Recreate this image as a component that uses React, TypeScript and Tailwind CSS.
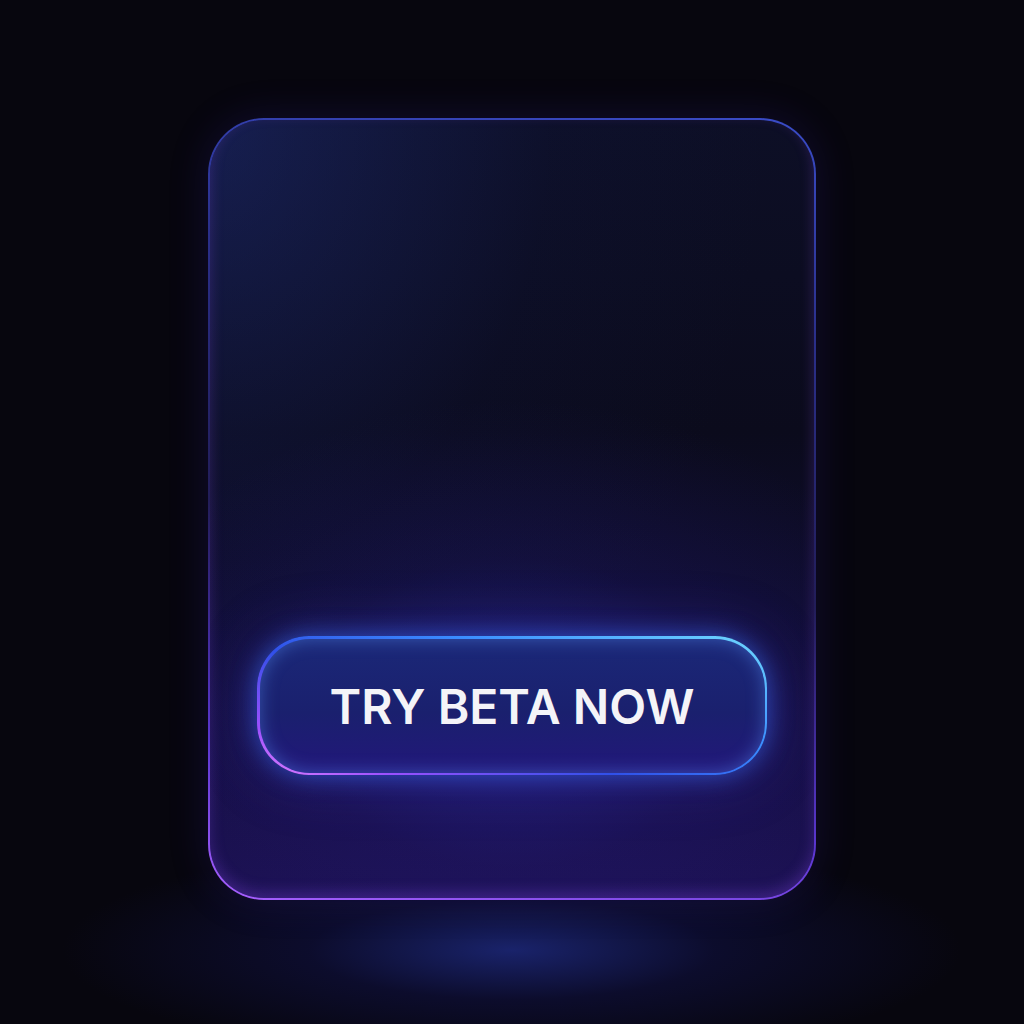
export default function App() {
  return (
    <div className="relative w-full h-[1024px] overflow-hidden bg-[#07060e] flex justify-center pt-[118px]">
      {/* floor glow */}
      <div className="absolute left-1/2 -translate-x-1/2 top-[840px] w-[900px] h-[220px] bg-[radial-gradient(ellipse_closest-side_at_center,rgba(30,42,130,0.8)_0%,rgba(20,22,90,0.4)_45%,rgba(7,6,14,0)_100%)]" />
      {/* card border */}
      <div className="relative w-[608px] h-[782px] rounded-[56px] p-[2px] bg-[linear-gradient(190deg,#3a4cc8_0%,#2a2f8a_25%,#221d58_55%,#5a36d0_82%,#a860ff_100%)] shadow-[0_0_40px_rgba(60,40,180,0.2)]">
        <div className="relative w-full h-full rounded-[54px] overflow-hidden bg-[linear-gradient(180deg,#0d0f26_0%,#0b0b1c_40%,#0f0d2e_62%,#150f40_80%,#1c1152_100%)] flex flex-col justify-end px-[47px] pb-[123px]">
          <div className="absolute inset-0 bg-[radial-gradient(ellipse_at_0%_0%,rgba(40,60,160,0.35)_0%,rgba(20,30,90,0.1)_40%,rgba(0,0,0,0)_65%)]" />
          <div className="absolute inset-0 bg-[radial-gradient(ellipse_70%_40%_at_50%_76%,rgba(45,45,180,0.45)_0%,rgba(40,30,140,0.18)_50%,rgba(0,0,0,0)_100%)]" />
          <div className="absolute inset-0 rounded-[54px] shadow-[inset_0_-6px_14px_rgba(150,80,255,0.25)]" />
          {/* button border */}
          <div className="relative h-[139px] rounded-[52px] p-[2.5px] bg-[linear-gradient(200deg,#6fd8ff_0%,#3a8cff_35%,#3050e8_60%,#9b50ff_85%,#e080ff_100%)] shadow-[0_0_24px_rgba(60,120,255,0.55),0_0_60px_rgba(70,60,230,0.35)]">
            <div className="w-full h-full rounded-[50px] bg-[linear-gradient(180deg,#1b2878_0%,#1a206e_55%,#22177a_100%)] shadow-[inset_0_0_18px_rgba(90,150,255,0.45)] flex items-center justify-center pt-[3px]">
              <span className="font-['Inter',sans-serif] font-semibold text-[48px] leading-none text-[#f4f4f8]">
                TRY BETA NOW
              </span>
            </div>
          </div>
        </div>
      </div>
    </div>
  );
}
